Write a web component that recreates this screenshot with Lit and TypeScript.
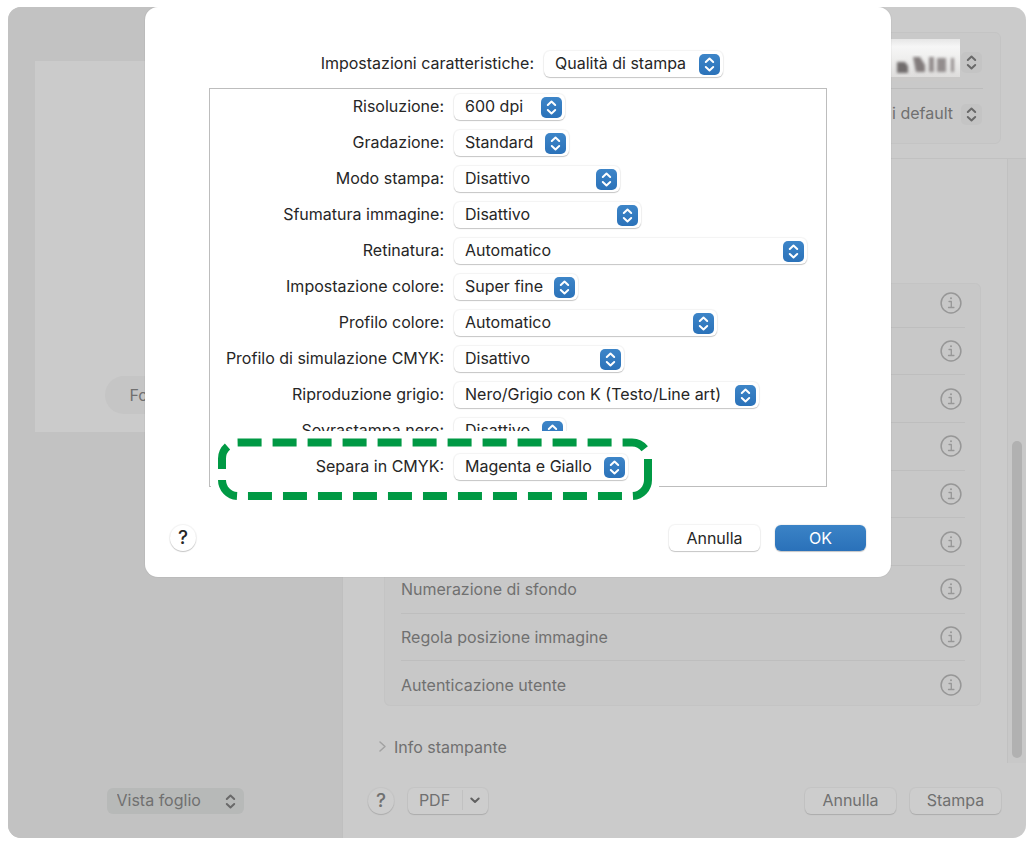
import { LitElement, html, css, svg, nothing } from "lit";
import { customElement } from "lit/decorators.js";

interface Setting {
  id: string;
  label: string;
  value: string;
  width: number;
  marked?: boolean;
}

const SETTINGS: Setting[] = [
  { id: "resolution", label: "Risoluzione:", value: "600 dpi", width: 111 },
  { id: "gradation", label: "Gradazione:", value: "Standard", width: 115 },
  { id: "mode", label: "Modo stampa:", value: "Disattivo", width: 166 },
  { id: "smoothing", label: "Sfumatura immagine:", value: "Disattivo", width: 187 },
  { id: "dithering", label: "Retinatura:", value: "Automatico", width: 353 },
  { id: "color", label: "Impostazione colore:", value: "Super fine", width: 124 },
  { id: "profile", label: "Profilo colore:", value: "Automatico", width: 263 },
  { id: "simulation", label: "Profilo di simulazione CMYK:", value: "Disattivo", width: 170 },
  { id: "gray", label: "Riproduzione grigio:", value: "Nero/Grigio con K (Testo/Line art)", width: 305 },
  { id: "overprint", label: "Sovrastampa nero:", value: "Disattivo", width: 112 },
  { id: "separate", label: "Separa in CMYK:", value: "Magenta e Giallo", width: 174, marked: true },
];

const OPTIONS = ["", "", "", "", "", "", "Numerazione di sfondo", "Regola posizione immagine", "Autenticazione utente"];

const arrows = svg`<path d="M6.8 8 10.5 4.6 14.2 8M6.8 13 10.5 16.4 14.2 13" />`;

@customElement("app-root")
export class AppRoot extends LitElement {
  static styles = css`
    :host {
      display: block;
      font: 16px/20px Inter, "Liberation Sans", sans-serif;
      color: #262626;
      background: #fff;
    }
    *, *::before {
      box-sizing: border-box;
    }
    button, select {
      font: inherit;
      color: inherit;
      margin: 0;
      appearance: none;
      outline: none;
    }
    svg {
      display: block;
      fill: none;
      stroke-linecap: round;
      stroke-linejoin: round;
    }
    .window {
      position: relative;
      display: flex;
      min-height: calc(100vh - 11px);
      margin: 7px 6px 4px 8px;
      border-radius: 13px;
      overflow: hidden;
      background: #cbcbcb;
      color: #707070;
    }

    /* preview pane */
    .preview {
      flex: 0 0 335px;
      display: flex;
      flex-direction: column;
      justify-content: space-between;
      align-items: center;
      padding: 54px 27px 24px;
      background: #c2c2c2;
      border-right: 1px solid #bfbfbf;
    }
    .paper {
      align-self: stretch;
      height: 371px;
      display: flex;
      justify-content: center;
      align-items: flex-end;
      padding-bottom: 18px;
      background: #cbcbcb;
    }
    .pill {
      width: 141px;
      padding: 9px 25px;
      border-radius: 19px;
      background: #c5c5c5;
    }

    /* pop-up menus */
    .popup {
      display: inline-grid;
      align-items: center;
    }
    .popup > select {
      grid-area: 1 / 1;
      width: 100%;
      height: 26px;
      padding: 0 11px 2px;
      border: 0;
      border-radius: 6px;
      background: #fff;
      box-shadow: 0 0 1px 1px #0000000d, 0 1px 1px #00000030;
    }
    .popup > svg {
      grid-area: 1 / 1;
      justify-self: end;
      margin-right: 3px;
      border-radius: 5px;
      pointer-events: none;
      stroke: #fff;
      stroke-width: 2;
      background: linear-gradient(#3d85c8, #2b72b9);
    }
    .popup.view {
      width: 137px;
    }
    .popup.view > select {
      padding-left: 10px;
      background: #b7b9b8;
      box-shadow: none;
    }
    .popup.view > svg, .popup.flat > svg {
      background: none;
      stroke: #696969;
    }
    .popup.flat {
      flex: 1;
    }
    .popup.flat > select {
      background: none;
      box-shadow: none;
      padding-right: 30px;
      text-align: right;
      text-align-last: right;
    }
    .popup.flat > svg {
      margin-right: 1px;
      background: #c4c4c4;
    }

    /* options pane */
    .main {
      flex: 1;
      display: flex;
      flex-direction: column;
      min-width: 0;
    }
    .top {
      padding: 25px 25px 14px 41px;
      border-bottom: 1px solid #c1c1c1;
    }
    .printer {
      padding: 0 17px;
      border: 1px solid #c4c4c4;
      border-radius: 6px;
      background: #c9c9c9;
    }
    .line {
      display: flex;
      justify-content: flex-end;
      align-items: center;
      height: 55px;
      padding-top: 4px;
    }
    .line + .line {
      border-top: 1px solid #bcbcbc;
      padding: 0 0 4px;
    }
    .line .name {
      flex: none;
      margin-top: -8px;
    }
    .line .stepper {
      flex: none;
      padding: 0;
      border: 0;
      margin-right: 1px;
      border-radius: 5px;
      background: #c4c4c4;
      stroke: #696969;
      stroke-width: 2;
    }
    .scroll {
      flex: 1;
      display: flex;
    }
    .content {
      flex: 1;
      padding: 124px 26px 0 41px;
    }
    .card {
      border-radius: 6px;
      background: #c8c8c8;
      box-shadow: inset 0 0 0 1px #c4c4c4;
      padding: 0 16px 0 17px;
      height: 423px;
    }
    .options {
      display: grid;
      grid-auto-rows: 1fr;
      height: 429px;
      margin: 0;
      padding: 0;
      list-style: none;
      position: relative;
      top: -4px;
    }
    .option {
      display: flex;
      justify-content: space-between;
      align-items: center;
      padding-right: 3px;
    }
    .option + .option {
      border-top: 1px solid #bebebe;
    }
    .info {
      margin-left: auto;
      padding: 0;
      border: 0;
      background: none;
      stroke: #979797;
      stroke-width: 1.5;
    }
    .disclosure {
      display: flex;
      align-items: center;
      gap: 6px;
      margin: 31px 0 0 -8px;
      padding: 0;
      border: 0;
      background: none;
      stroke: #a2a2a2;
      stroke-width: 1.5;
    }
    .track {
      flex: 0 0 19px;
      padding: 282px 4px 0;
      background: #c8c8c8;
      border-left: 1px solid #c1c1c1;
    }
    .thumb {
      height: 317px;
      border-radius: 5px;
      background: #b1b1b1;
    }
    .actions {
      display: flex;
      align-items: center;
      gap: 14px;
    }
    .main > .actions {
      height: 75px;
      padding: 0 25px;
    }
    .button {
      display: flex;
      justify-content: center;
      align-items: center;
      width: 91px;
      height: 26px;
      padding: 0;
      border: 0;
      border-radius: 6px;
      background: #fff;
      box-shadow: 0 0 1px 1px #0000000d, 0 1px 1px #00000030;
    }
    .main .button {
      padding-bottom: 2px;
      background: #cdcdcd;
      box-shadow: 0 0 1px 1px #00000009, 0 1px 1px #00000020;
    }
    .button.help {
      width: 26px;
      border-radius: 50%;
      font-size: 19px;
      font-weight: 500;
      margin-right: auto;
    }
    .main .button.help {
      padding-bottom: 0;
      margin-right: 0;
    }
    .button.pdf {
      width: 80px;
      padding-left: 4px;
      margin-right: auto;
      stroke: #606060;
      stroke-width: 2;
    }
    .pdf > span {
      padding-right: 12px;
      margin-right: 6px;
      border-right: 1px solid #c1c1c1;
    }
    .button.primary {
      color: #fff;
      background: linear-gradient(#3b83c6, #2a71b9);
    }

    /* dialog */
    .overlay {
      position: absolute;
      inset: 0;
      display: flex;
      justify-content: center;
      align-items: flex-start;
      padding-left: 2px;
    }
    .dialog {
      width: 746px;
      padding: 44px 25px 26px;
      border-radius: 13px;
      background: #fff;
      color: #262626;
      box-shadow: 0 0 0 1px #00000008;
    }
    .feature, .row {
      display: grid;
      justify-content: start;
      align-items: center;
      gap: 10px;
    }
    .feature {
      grid-template-columns: 325px auto;
      margin-left: 39px;
    }
    .settings {
      margin: 11px 39px 38px;
      padding-bottom: 1px;
      border: 1px solid #bdbdbd;
    }
    .row {
      grid-template-columns: 234px auto;
      height: 36px;
    }
    .dialog label {
      padding-bottom: 2px;
      text-align: right;
      white-space: nowrap;
    }
    .row.marked {
      position: relative;
      isolation: isolate;
    }
    .marker {
      position: absolute;
      z-index: -1;
      left: 1px;
      top: -18px;
      background: #fff;
      stroke: #009944;
      stroke-width: 8;
      stroke-dasharray: 24 11;
      stroke-linecap: butt;
    }
    .dialog .actions {
      gap: 15px;
    }
  `;

  private popup(id: string, value: string, width: number) {
    return html`<span class="popup" style="width:${width}px">
      <select id=${id}><option>${value}</option></select>
      <svg width="21" height="21" viewBox="0 0 21 21" aria-hidden="true">${arrows}</svg>
    </span>`;
  }

  private row(s: Setting) {
    return html`<div class="row ${s.marked ? "marked" : ""}">
      ${s.marked
        ? html`<svg class="marker" width="448" height="74" viewBox="211 431 448 74" aria-hidden="true">
            <path d="M648 480a16 16 0 0 1-16 16H238a16 16 0 0 1-16-16V458.500a16 16 0 0 1 16-16H632a16 16 0 0 1 16 16V480" />
          </svg>`
        : nothing}
      <label for=${s.id}>${s.label}</label>
      ${this.popup(s.id, s.value, s.width)}
    </div>`;
  }

  private option(text: string) {
    return html`<li class="option">
      ${text ? html`<span>${text}</span>` : nothing}
      <button class="info" aria-label="Info">
        <svg width="22" height="22" viewBox="0 0 22 22">
          <circle cx="11" cy="11" r="9.900" />
          <path d="M9 9.500h2.300v6M8.500 15.500h5.400" stroke-width="1.300" />
          <circle cx="11" cy="6.200" r="1" fill="#979797" stroke="none" />
        </svg>
      </button>
    </li>`;
  }

  render() {
    return html`<div class="window">
      <section class="preview">
        <div class="paper"><div class="pill">Fo</div></div>
        <span class="popup view">
          <select aria-label="Vista"><option>Vista foglio</option></select>
          <svg width="21" height="21" viewBox="0 0 21 21" aria-hidden="true">${arrows}</svg>
        </span>
      </section>

      <section class="main">
        <div class="top">
          <div class="printer">
            <div class="line">
              <svg class="name" width="74" height="44" viewBox="0 0 74 44" aria-hidden="true">
                <defs>
                  <linearGradient id="fade" x2="0" y2="1">
                    <stop offset="0" stop-color="#e6e6e6" />
                    <stop offset=".2" stop-color="#f6f6f6" />
                    <stop offset=".5" stop-color="#efefee" />
                    <stop offset="1" stop-color="#dedddc" />
                  </linearGradient>
                  <filter id="soft"><feGaussianBlur stdDeviation="1.800" /></filter>
                </defs>
                <path fill="url(#fade)" d="M0 2H73V40H0z" />
                <path fill="#cac9c8" d="M0 40H73V44H0z" />
                <g filter="url(#soft)">
                  <path fill="#6f6c6c" d="M10 25h8l3 4v7H10z" />
                  <path fill="#827c7c" d="M26 20h7l5 8v7h-9z" />
                  <path fill="#938d8d" d="M42 20h5v15h-5zM50 21h9v14h-9zM64 21h3v14h-3z" />
                </g>
              </svg>
              <button class="stepper" aria-label="Stampante">
                <svg width="21" height="21" viewBox="0 0 21 21">${arrows}</svg>
              </button>
            </div>
            <div class="line">
              <span class="popup flat">
                <select aria-label="Preimpostazioni"><option>i default</option></select>
                <svg width="21" height="21" viewBox="0 0 21 21" aria-hidden="true">${arrows}</svg>
              </span>
            </div>
          </div>
        </div>
        <div class="scroll">
          <div class="content">
            <div class="card"><ul class="options">${OPTIONS.map((o) => this.option(o))}</ul></div>
            <button class="disclosure">
              <svg width="12" height="14" viewBox="0 0 12 14"><path d="M4 2 9 6.500 4 11" /></svg>
              <span>Info stampante</span>
            </button>
          </div>
          <div class="track"><div class="thumb"></div></div>
        </div>
        <div class="actions">
          <button class="button help">?</button>
          <button class="button pdf">
            <span>PDF</span>
            <svg width="12" height="10" viewBox="0 0 12 10"><path d="M2.300 3.500 6 7 9.700 3.500" /></svg>
          </button>
          <button class="button">Annulla</button>
          <button class="button">Stampa</button>
        </div>
      </section>

      <div class="overlay">
        <div class="dialog" role="dialog">
          <div class="feature">
            <label for="feature">Impostazioni caratteristiche:</label>
            ${this.popup("feature", "Qualità di stampa", 179)}
          </div>
          <div class="settings">${SETTINGS.map((s) => this.row(s))}</div>
          <div class="actions">
            <button class="button help">?</button>
            <button class="button">Annulla</button>
            <button class="button primary">OK</button>
          </div>
        </div>
      </div>
    </div>`;
  }
}
